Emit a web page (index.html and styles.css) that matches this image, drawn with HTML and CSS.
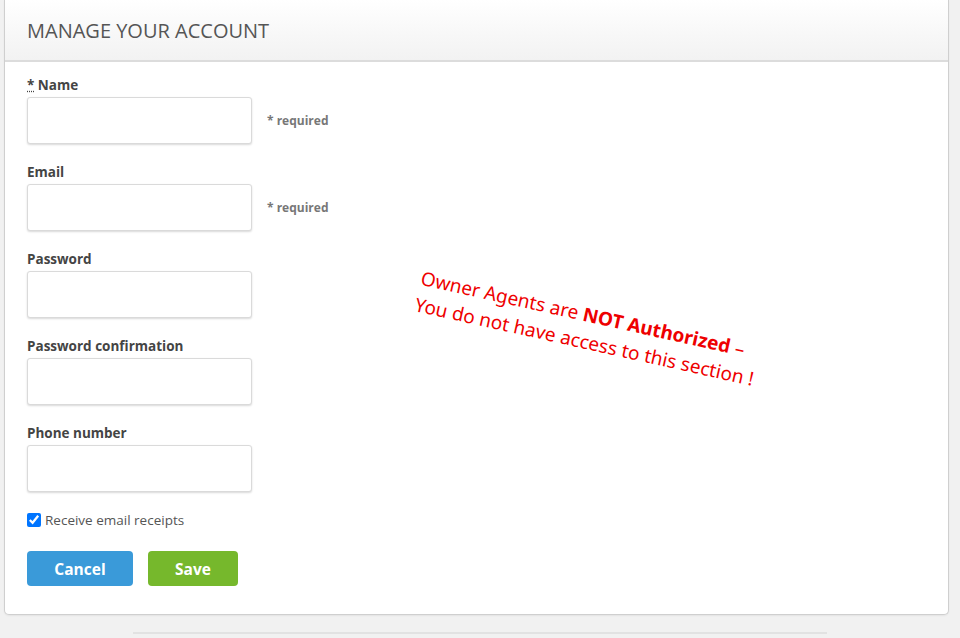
FILE: index.html
```html
<!DOCTYPE html>
<html lang="en">
<head>
    <meta charset="UTF-8">
    <meta name="viewport" content="width=device-width, initial-scale=1.0">
    <title>Manage Your Account</title>
    <link rel="stylesheet" href="styles.css">
</head>
<body>
    <div class="panel">
        <div class="panel-header">
            <h2>MANAGE YOUR ACCOUNT</h2>
        </div>

        <form class="panel-body" onsubmit="return false;">
            <div class="field">
                <label for="name"><abbr title="required">*</abbr> Name</label>
                <div class="field-row">
                    <input type="text" id="name">
                    <span class="hint">* required</span>
                </div>
            </div>

            <div class="field">
                <label for="email">Email</label>
                <div class="field-row">
                    <input type="email" id="email">
                    <span class="hint">* required</span>
                </div>
            </div>

            <div class="field">
                <label for="password">Password</label>
                <div class="field-row">
                    <input type="password" id="password">
                </div>
            </div>

            <div class="field">
                <label for="passwordConfirmation">Password confirmation</label>
                <div class="field-row">
                    <input type="password" id="passwordConfirmation">
                </div>
            </div>

            <div class="field">
                <label for="phone">Phone number</label>
                <div class="field-row">
                    <input type="tel" id="phone">
                </div>
            </div>

            <label class="check">
                <input type="checkbox" checked> Receive email receipts
            </label>

            <div class="actions">
                <button type="button" class="btn btn-cancel">Cancel</button>
                <button type="submit" class="btn btn-save">Save</button>
            </div>

            <div class="notice">
                Owner Agents are <b>NOT Authorized</b> &ndash;<br>
                You do not have access to this section !
            </div>
        </form>
    </div>

    <div class="footer-line"></div>
</body>
</html>
```

FILE: styles.css
```css
body {
    margin: 0;
    background-color: #f1f1f1;
    font-family: 'Open Sans', sans-serif;
    color: #444;
}

.panel {
    margin: 0 11px 0 4px;
    background-color: #fff;
    border: 1px solid #cfcfcf;
    border-top: none;
    border-radius: 0 0 5px 5px;
    box-shadow: 0 1px 2px rgba(0, 0, 0, 0.06);
}

.panel-header {
    height: 60px;
    display: flex;
    align-items: center;
    padding-left: 22px;
    background: linear-gradient(#ffffff, #f2f2f2);
    border-bottom: 2px solid #dcdcdc;
}

.panel-header h2 {
    margin: 0;
    font-size: 20px;
    font-weight: normal;
    color: #555;
}

.panel-body {
    position: relative;
    padding: 14px 22px 28px;
}

.field {
    margin-bottom: 19px;
}

.field label {
    display: block;
    font-size: 13.5px;
    font-weight: bold;
    line-height: 18px;
    margin-bottom: 3px;
    color: #444;
}

abbr {
    text-decoration: underline dotted;
}

.field-row {
    display: flex;
    align-items: center;
    gap: 15px;
}

.field-row input {
    width: 225px;
    height: 47px;
    box-sizing: border-box;
    border: 1px solid #dadada;
    border-radius: 3px;
    box-shadow: 0 1px 2px rgba(0, 0, 0, 0.15);
    background-color: #fff;
    font-family: inherit;
    font-size: 14px;
    padding: 0 10px;
}

.hint {
    font-size: 12px;
    font-weight: bold;
    color: #777;
}

.check {
    display: flex;
    align-items: center;
    gap: 4px;
    font-size: 13.5px;
    color: #555;
}

.check input {
    margin: 0;
    width: 14px;
    height: 14px;
}

.actions {
    display: flex;
    gap: 15px;
    margin-top: 22px;
}

.btn {
    height: 35px;
    border: none;
    border-radius: 4px;
    color: #fff;
    font-family: inherit;
    font-size: 15.5px;
    font-weight: bold;
    cursor: pointer;
}

.btn-cancel {
    width: 106px;
    background-color: #3a9ad9;
}

.btn-save {
    width: 90px;
    background-color: #76b82c;
}

.notice {
    position: absolute;
    left: 419px;
    top: 203px;
    transform: rotate(12.5deg);
    transform-origin: left top;
    font-family: 'Noto Sans', sans-serif;
    font-size: 19px;
    line-height: 27px;
    color: #ee0000;
    white-space: nowrap;
}

.footer-line {
    margin: 17px 0 0 133px;
    width: 694px;
    border-top: 2px solid #e2e2e2;
}
```
